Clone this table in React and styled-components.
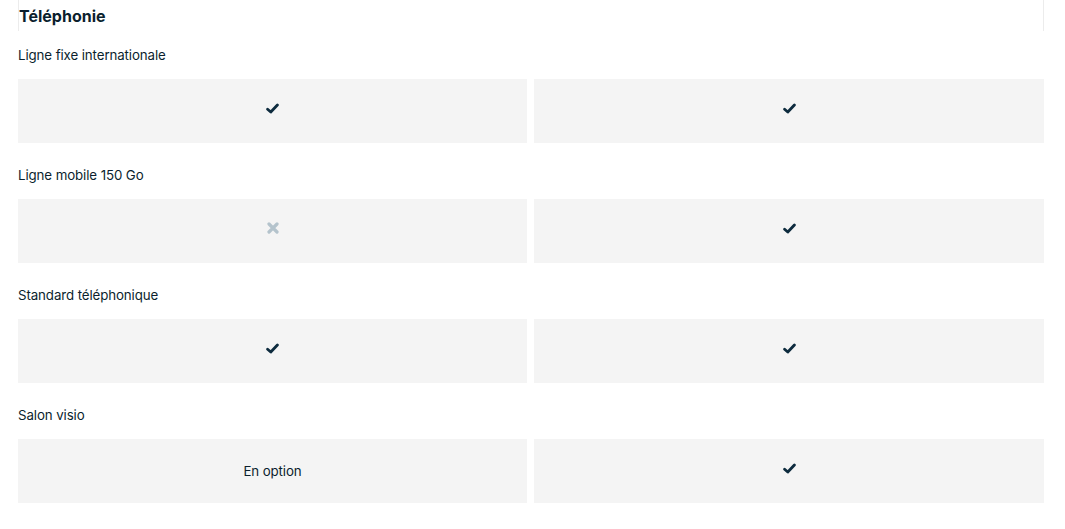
import React from 'react';
import styled, { createGlobalStyle } from 'styled-components';

const GlobalStyle = createGlobalStyle`
  body {
    margin: 0;
    background: #fff;
    font-family: Inter, 'Noto Sans', sans-serif;
    color: #0b1f2e;
  }
`;

const Page = styled.div`
  width: 1026px;
  padding-left: 18px;
`;

const Header = styled.div`
  height: 31px;
  border-left: 1px solid #ececec;
  border-right: 1px solid #ececec;
  box-sizing: border-box;
  width: 1026px;
`;

const Title = styled.h2`
  margin: 0;
  padding: 6px 0 0 0;
  font-size: 16px;
  line-height: 20px;
  font-weight: 700;
  color: #0b1f2e;
`;

const Section = styled.div`
  padding-top: ${(p) => (p.$first ? '12px' : '20px')};
`;

const Label = styled.div`
  font-size: 13.3px;
  line-height: 24px;
  margin-bottom: 12px;
  letter-spacing: -0.1px;
`;

const Row = styled.div`
  display: grid;
  grid-template-columns: 509px 1fr;
  gap: 7px;
`;

const Cell = styled.div`
  height: 64px;
  background: #f4f4f4;
  display: flex;
  align-items: center;
  justify-content: center;
  font-size: 13.3px;
  letter-spacing: -0.1px;
  color: #0b1f2e;

  svg {
    margin-bottom: 6px;
  }
`;

const Check = () => (
  <svg width="13" height="11" viewBox="0 0 13 11">
    <path d="M1.6 6.2 L4.8 9 L11.4 2" fill="none" stroke="#0d2b3e" strokeWidth="2.8" strokeLinecap="round" strokeLinejoin="round" />
  </svg>
);

const Cross = () => (
  <svg width="12" height="12" viewBox="0 0 12 12">
    <path d="M2 2 L10 10 M10 2 L2 10" fill="none" stroke="#b4c3cc" strokeWidth="3.2" strokeLinecap="round" />
  </svg>
);

const render = (v) => {
  if (v === true) return <Check />;
  if (v === false) return <Cross />;
  return v;
};

const rows = [
  { label: 'Ligne fixe internationale', values: [true, true] },
  { label: 'Ligne mobile 150 Go', values: [false, true] },
  { label: 'Standard téléphonique', values: [true, true] },
  { label: 'Salon visio', values: ['En option', true] },
];

export default function App() {
  return (
    <>
      <GlobalStyle />
      <Page>
        <Header>
          <Title>Téléphonie</Title>
        </Header>
        {rows.map((r, i) => (
          <Section key={r.label} $first={i === 0}>
            <Label>{r.label}</Label>
            <Row>
              {r.values.map((v, j) => (
                <Cell key={j}>{render(v)}</Cell>
              ))}
            </Row>
          </Section>
        ))}
      </Page>
    </>
  );
}
